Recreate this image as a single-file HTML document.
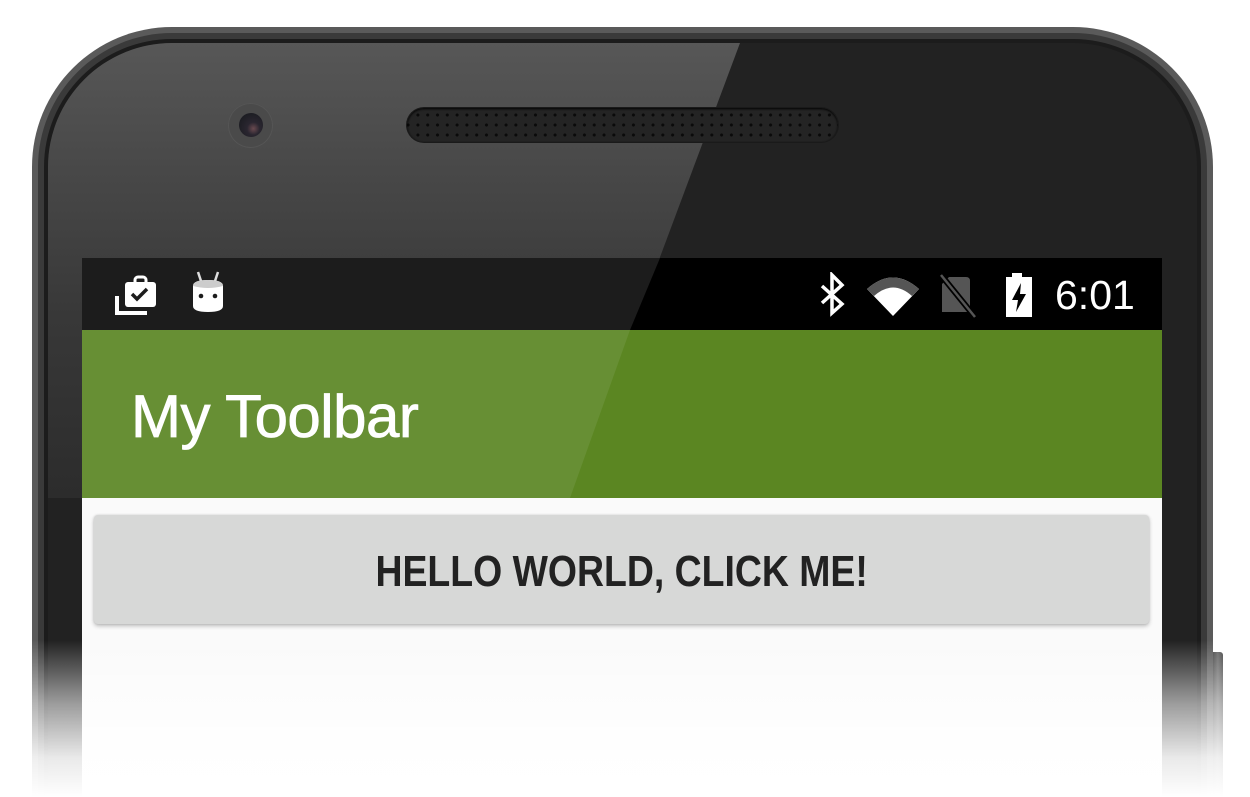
<!DOCTYPE html>
<html><head><meta charset="utf-8"><style>
html,body{margin:0;padding:0;width:1250px;height:797px;overflow:hidden;background:#fff;position:relative;font-family:"Liberation Sans",sans-serif}
.abs{position:absolute}
</style></head><body>
<div class="abs" style="left:1210px;top:652px;width:13px;height:145px;background:linear-gradient(90deg,#333,#666 60%,#444);border-radius:0 3px 0 0"></div>
<div class="abs" style="left:32px;top:27px;width:1181px;height:770px;border-radius:140px 140px 0 0;background:#5a5a5a"></div>
<div class="abs" style="left:38px;top:33px;width:1169px;height:764px;border-radius:134px 134px 0 0;background:#3a3a3a"></div>
<div class="abs" style="left:44px;top:39px;width:1157px;height:758px;border-radius:128px 128px 0 0;background:#1c1c1c"></div>
<div class="abs" style="left:48px;top:43px;width:1149px;height:754px;border-radius:124px 124px 0 0;background:#222;overflow:hidden">
  <div class="abs" style="left:0;top:0;width:1149px;height:455px;background:linear-gradient(180deg,#575757 0%,#474747 30%,#383838 60%,#2c2c2c 100%);clip-path:polygon(0 0,692px 0,522px 455px,0 455px)"></div>
</div>
<div class="abs" style="left:228px;top:103px;width:45px;height:45px;border-radius:50%;background:#4a4a4a;box-shadow:0 0 0 1px #555 inset"></div>
<div class="abs" style="left:239px;top:113px;width:24px;height:24px;border-radius:50%;background:radial-gradient(circle at 60% 65%,#6a4a50 0,#2a2630 30%,#1e1e24 70%)"></div>
<div class="abs" style="left:407px;top:108px;width:431px;height:34px;border-radius:17px;background:#242424;box-shadow:0 0 0 1px #1a1a1a, inset 0 1px 2px #000;background-image:radial-gradient(circle,#0a0a0a 1.3px,transparent 1.8px);background-size:9.8px 10px;background-position:6px 2px"></div>
<div class="abs" style="left:82px;top:258px;width:1080px;height:539px;background:#fafafa;overflow:hidden">
  <div class="abs" style="left:0;top:0;width:1080px;height:72px;background:#000"></div>
  <div class="abs" style="left:0;top:0;width:1080px;height:72px;background:#1c1c1c;clip-path:polygon(0 0,578px 0,548px 72px,0 72px)"></div>
  <div class="abs" style="left:0;top:72px;width:1080px;height:168px;background:#5b8622"></div>
  <div class="abs" style="left:0;top:72px;width:1080px;height:168px;background:#678f34;clip-path:polygon(0 0,548px 0,488px 168px,0 168px)"></div>
  <div class="abs" style="left:49px;top:124px;color:#fff;font-size:60px;line-height:70px;white-space:nowrap;letter-spacing:-0.5px;-webkit-text-stroke:0.8px #fff">My Toolbar</div>
  <div class="abs" style="left:12px;top:257px;width:1055px;height:109px;background:#d7d8d7;border-radius:4px;box-shadow:0 2px 4px rgba(0,0,0,.25),0 0 2px rgba(0,0,0,.12)"></div>
  <div class="abs" style="left:12px;top:259px;width:1055px;height:109px;line-height:109px;text-align:center;color:#222;font-size:44px;font-weight:bold;white-space:nowrap"><span style="display:inline-block;transform:scaleX(0.85)">HELLO WORLD, CLICK ME!</span></div>
  <svg class="abs" style="left:30px;top:14px" width="50" height="46" viewBox="0 0 50 46">
    <rect x="13" y="10" width="31" height="25" rx="3" fill="#fff"/>
    <rect x="23" y="5" width="11" height="8" rx="3" fill="none" stroke="#fff" stroke-width="3"/>
    <path d="M20 22 l5 5 l10 -10" fill="none" stroke="#1c1c1c" stroke-width="3.5"/>
    <path d="M5 24 v17 h30" fill="none" stroke="#fff" stroke-width="4"/>
  </svg>
  <svg class="abs" style="left:106px;top:12px" width="40" height="46" viewBox="0 0 40 46">
    <path d="M10 2 l3 9 M30 2 l-3 9" stroke="#ddd" stroke-width="2.5"/>
    <path d="M5 16 q0 -6 15 -6 q15 0 15 6 v20 q0 6 -15 6 q-15 0 -15 -6 z" fill="#fff"/>
    <path d="M5 16 q0 -6 15 -6 q15 0 15 6 q-15 4 -30 0z" fill="#ccc"/>
    <circle cx="13" cy="26" r="2.3" fill="#1c1c1c"/><circle cx="27" cy="26" r="2.3" fill="#1c1c1c"/>
  </svg>
  <svg class="abs" style="left:734px;top:14px" width="34" height="46" viewBox="0 0 34 46">
    <path d="M6 14 L26 32 L16 41 V3 L26 13 L6 31" fill="none" stroke="#fff" stroke-width="3.5"/>
  </svg>
  <svg class="abs" style="left:784px;top:14px" width="56" height="46" viewBox="0 0 56 46">
    <path d="M1 17 Q27 -6 53 17 L27 44 Z" fill="#fff"/>
    <path d="M1 17 Q27 -6 53 17 L46 24 Q27 7 8 24 Z" fill="#555"/>
  </svg>
  <svg class="abs" style="left:856px;top:14px" width="44" height="46" viewBox="0 0 44 46">
    <path d="M4 12 L11 5 H28 Q32 5 32 9 V40 H4 Z" fill="#555"/>
    <path d="M3 3 L37 45" stroke="#000" stroke-width="6"/>
    <path d="M3 3 L37 45" stroke="#555" stroke-width="2.5"/>
  </svg>
  <svg class="abs" style="left:920px;top:12px" width="34" height="48" viewBox="0 0 34 48">
    <rect x="10" y="3" width="10" height="6" fill="#fff"/>
    <rect x="4" y="7" width="26" height="40" fill="#fff"/>
    <path d="M19 13 L10 30 H16 L14 42 L24 24 H18 Z" fill="#000"/>
  </svg>
  <div class="abs" style="left:973px;top:14px;color:#fff;font-size:41px;line-height:46px">6:01</div>
</div>
<div class="abs" style="left:0;top:640px;width:1250px;height:157px;background:linear-gradient(180deg,rgba(255,255,255,0) 0%,rgba(255,255,255,.55) 40%,rgba(255,255,255,.9) 75%,#fff 100%)"></div>
</body></html>
